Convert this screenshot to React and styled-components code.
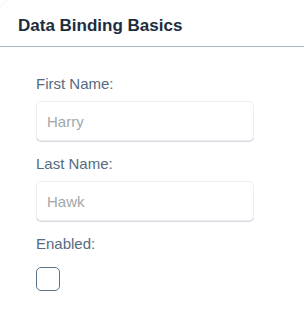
import React from "react";
import styled, { createGlobalStyle } from "styled-components";

const Global = createGlobalStyle`
  html, body { margin: 0; padding: 0; background: #ffffff; }
  body { font-family: "Liberation Sans", Arial, sans-serif; }
`;

const Card = styled.div`
  width: 304px;
  height: 310px;
  box-sizing: border-box;
  background: #ffffff;
  border-radius: 12px 0 0 0;
  box-shadow: 0 0 2px rgba(34, 53, 72, 0.12);
  display: flex;
  flex-direction: column;
  overflow: hidden;
`;

const Header = styled.div`
  height: 47px;
  box-sizing: border-box;
  padding: 15px 18px 0;
  border-bottom: 1px solid #a9b4be;
  display: flex;
  align-items: flex-start;
`;

const Title = styled.h2`
  margin: 0;
  font-size: 17px;
  line-height: 22px;
  font-weight: 700;
  color: #1d2d3e;
`;

const Form = styled.div`
  padding: 28px 50px 0 36px;
  display: flex;
  flex-direction: column;
`;

const Field = styled.div`
  display: flex;
  flex-direction: column;
  gap: ${(p) => p.$gap || 8}px;
  margin-bottom: 14px;
`;

const Label = styled.label`
  font-size: 15px;
  line-height: 18px;
  color: #556b82;
`;

const Input = styled.div`
  height: 40px;
  box-sizing: border-box;
  border: 1px solid #eceef1;
  border-radius: 5px;
  box-shadow: 0 1px 0 #d3dae1;
  padding: 0 10px;
  display: flex;
  align-items: center;
  font-size: 15px;
  color: #a3a7ab;
  background: #ffffff;
`;

const Checkbox = styled.div`
  width: 24px;
  height: 24px;
  box-sizing: border-box;
  border: 1px solid #5b738b;
  border-radius: 5px;
  background: #ffffff;
`;

export default function App() {
  return (
    <>
      <Global />
      <Card>
        <Header>
          <Title>Data Binding Basics</Title>
        </Header>
        <Form>
          <Field>
            <Label>First Name:</Label>
            <Input>Harry</Input>
          </Field>
          <Field>
            <Label>Last Name:</Label>
            <Input>Hawk</Input>
          </Field>
          <Field $gap={14}>
            <Label>Enabled:</Label>
            <Checkbox />
          </Field>
        </Form>
      </Card>
    </>
  );
}
